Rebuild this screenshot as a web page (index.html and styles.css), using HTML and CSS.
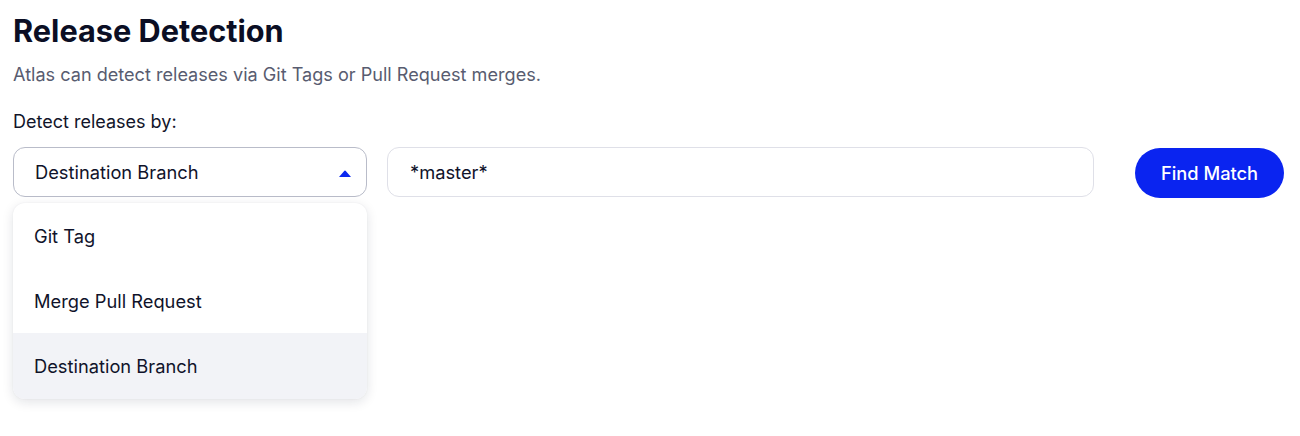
FILE: index.html
```html
<!DOCTYPE html>
<html>
<head>
<meta charset="utf-8">
<link rel="stylesheet" href="styles.css">
</head>
<body>
<main class="page">
  <h1 class="title">Release Detection</h1>
  <p class="subtitle">Atlas can detect releases via Git Tags or Pull Request merges.</p>
  <div class="label">Detect releases by:</div>
  <div class="row">
    <div class="select-col">
      <div class="select">
        <span>Destination Branch</span>
        <svg class="caret" width="14" height="8" viewBox="0 0 14 8"><path d="M1 8 L6 2.2 Q7 1 8 2.2 L13 8 Z" fill="#0a28f0"/></svg>
      </div>
      <div class="menu">
        <div class="item">Git Tag</div>
        <div class="item">Merge Pull Request</div>
        <div class="item active">Destination Branch</div>
      </div>
    </div>
    <div class="input">*master*</div>
    <button class="btn">Find Match</button>
  </div>
</main>
</body>
</html>
```
FILE: styles.css
```css
* { box-sizing: border-box; }
html, body { margin: 0; padding: 0; background: #fff; }
body { font-family: Inter, "Noto Sans", sans-serif; color: #0f1226; min-height: 436px; }
.page { padding: 13px 16px 30px 13px; }
.title { margin: 0; font-size: 30.7px; font-weight: 700; line-height: 36px; color: #0b0e24; }
.subtitle { margin: 15px 0 0; font-size: 18.1px; line-height: 20px; color: #585c70; }
.label { margin-top: 28px; font-size: 18px; line-height: 20px; color: #12152a; }
.row { display: flex; align-items: flex-start; margin-top: 15px; }
.select-col { width: 354px; flex: none; display: flex; flex-direction: column; gap: 6px; }
.select { height: 50px; border: 1px solid #b9bcc9; border-radius: 12px; display: flex; align-items: center; justify-content: space-between; padding: 0 14px 0 21px; font-size: 18.3px; color: #10132a; }
.caret { margin-top: 1px; }
.menu { background: #fff; border-radius: 12px; box-shadow: 0 3px 12px rgba(20, 24, 50, 0.12), 0 0 2px rgba(20, 24, 50, 0.06); overflow: hidden; }
.item { height: 65px; display: flex; align-items: center; padding-left: 21px; font-size: 18.3px; color: #10132a; }
.item.active { background: #f2f3f7; height: 66px; }
.input { margin-left: 20px; width: 707px; height: 50px; border: 1px solid #dfe0e8; border-radius: 12px; display: flex; align-items: center; padding-left: 22px; font-size: 18.3px; color: #10132a; }
.btn { margin-left: 41px; margin-top: 1px; width: 149px; height: 50px; border: none; border-radius: 25px; background: #0a24f0; color: #fff; font-family: Inter, sans-serif; font-size: 18.3px; font-weight: 500; padding: 0; }
```
